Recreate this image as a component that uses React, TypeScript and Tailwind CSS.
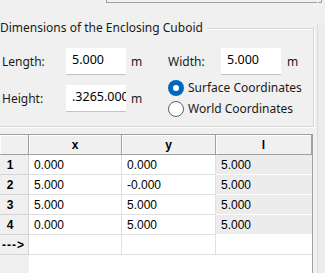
const rows = [
  { h: "1", x: "0.000", y: "0.000", l: "5.000" },
  { h: "2", x: "5.000", y: "-0.000", l: "5.000" },
  { h: "3", x: "5.000", y: "5.000", l: "5.000" },
  { h: "4", x: "0.000", y: "5.000", l: "5.000" },
];

const ui = { fontFamily: '"Noto Sans", "Open Sans", sans-serif' };
const grid = { fontFamily: '"Liberation Sans", Arial, sans-serif' };

const Field = ({ value }: { value: string }) => (
  <div className="h-[27px] w-[60px] shrink-0 overflow-hidden whitespace-nowrap border-b border-[#c4c4c4] bg-white pl-[6px] pt-[3px] text-[12.5px] text-black">
    {value}
  </div>
);

const Radio = ({ label, checked }: { label: string; checked?: boolean }) => (
  <div className="flex h-[21px] items-center gap-[4px]">
    {checked ? (
      <span className="flex h-[16px] w-[16px] items-center justify-center rounded-full bg-[#0067c0]">
        <span className="h-[6px] w-[6px] rounded-full bg-white" />
      </span>
    ) : (
      <span className="h-[16px] w-[16px] rounded-full border border-[#5f5f5f] bg-white" />
    )}
    <span>{label}</span>
  </div>
);

export default function App() {
  return (
    <div className="flex h-[273px] w-[325px] overflow-hidden bg-[#f0f0f0] text-[12px] text-[#1a1a1a]" style={ui}>
      <div className="flex w-[317px] shrink-0 flex-col">
        {/* bottom of the panel above */}
        <div className="ml-[106px] h-[3px] w-[211px] shrink-0 border-b border-l border-[#a0a0a0]" />

        {/* group box */}
        <div className="relative mt-[25px] h-[99px] w-[314px] shrink-0 border-y border-r border-[#d5d5d5] shadow-[inset_0_1px_0_white,1px_1px_0_white]">
          <span className="absolute -top-[11px] left-0 bg-[#f0f0f0] pr-[4px] leading-[20px]">
            Dimensions of the Enclosing Cuboid
          </span>
          <div className="mt-[19px] flex items-start">
            <span className="mt-[5px] w-[66px] pl-[2px]">Length:</span>
            <Field value="5.000" />
            <span className="ml-[5px] mt-[5px] w-[37px]">m</span>
            <span className="mt-[5px] w-[53px]">Width:</span>
            <Field value="5.000" />
            <span className="ml-[6px] mt-[5px]">m</span>
          </div>
          <div className="mt-[10px] flex items-start">
            <span className="mt-[5px] w-[66px] pl-[2px]">Height:</span>
            <Field value=".3265.000" />
            <span className="ml-[5px] mt-[5px] w-[37px]">m</span>
            <div className="-mt-[8px] flex flex-col">
              <Radio label="Surface Coordinates" checked />
              <Radio label="World Coordinates" />
            </div>
          </div>
        </div>

        {/* table */}
        <div className="mt-[7px] min-h-0 w-[313px] flex-1 overflow-hidden border-r border-t border-[#a0a0a0] bg-white text-[12px] text-black" style={grid}>
          <div className="grid grid-cols-[29px_93px_94px_96px]">
            <div className="h-[20px] border-b border-r border-[#a0a0a0] bg-[#f0f0f0] shadow-[inset_1px_1px_0_white]" />
            {["x", "y", "l"].map((c) => (
              <div
                key={c}
                className="flex h-[20px] items-center justify-center border-b border-r border-[#a0a0a0] bg-[#f0f0f0] font-bold shadow-[inset_1px_1px_0_white] last:border-r-0"
              >
                {c}
              </div>
            ))}
            {rows.map((r) => (
              <>
                <div key={r.h + "h"} className="flex h-[20px] items-center border-b border-r border-[#d4d4d4] bg-[#f0f0f0] pl-[5px] font-bold">
                  <span className="w-[10px] text-center">{r.h}</span>
                </div>
                <div className="flex h-[20px] items-center border-b border-r border-[#e0e0e0] pl-[5px]">{r.x}</div>
                <div className="flex h-[20px] items-center border-b border-r border-[#e0e0e0] pl-[5px]">{r.y}</div>
                <div className="flex h-[20px] items-center border-b border-white bg-[#ececec] pl-[5px]">{r.l}</div>
              </>
            ))}
            <div className="flex h-[20px] items-center justify-end overflow-hidden whitespace-nowrap border-b border-r border-[#d4d4d4] bg-[#f0f0f0] pr-[3px] font-bold tracking-[1px]">---&gt;</div>
            <div className="h-[20px] border-b border-r border-[#e0e0e0]" />
            <div className="h-[20px] border-b border-r border-[#e0e0e0]" />
            <div className="h-[20px] border-b border-[#e0e0e0]" />
            <div className="h-[40px] bg-[#f0f0f0]" />
          </div>
        </div>
      </div>
      <div className="mt-[24px] flex-1 border-l border-[#dcdcdc] bg-[#ececec]">
        <div className="-mt-[24px] h-[3px] w-[4px] border-b border-r border-[#a0a0a0]" />
      </div>
    </div>
  );
}
